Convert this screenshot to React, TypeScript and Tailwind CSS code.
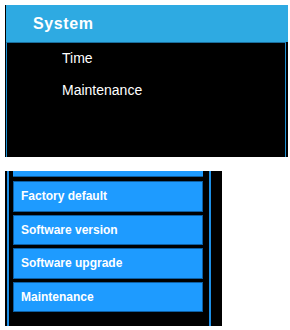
import React from "react";

const items = ["Factory default", "Software version", "Software upgrade", "Maintenance"];

function SystemMenu() {
  return (
    <div className="ml-[5px] mt-[5px] w-[283px] h-[152px] flex flex-col bg-black border-l border-black">
      <div className="h-[37px] bg-[#2eaae2] flex items-center pl-[27px]">
        <span className="text-white font-bold text-[16px] tracking-[0.6px]">System</span>
      </div>
      <div className="flex-1 bg-black border-t border-[#1b6e9c] border-x border-x-[#1e8fd0] mr-[2px] pl-[55px] pt-[5px]">
        <div className="text-white text-[14px] leading-[20px] h-[20px]">Time</div>
        <div className="text-white text-[14px] leading-[20px] h-[20px] mt-[12px]">Maintenance</div>
      </div>
    </div>
  );
}

function ButtonList() {
  return (
    <div className="ml-[5px] mt-[14px] w-[217px] h-[155px] bg-black flex pl-[2px]">
      <div className="w-[2px] bg-[#1e8fe6]" />
      <div className="w-[200px] flex flex-col gap-[3px] pl-[4px] pr-[2px]">
        <div className="h-[6px] w-[190px] bg-[#1e9bff] border-b border-[#0d5fa3]" />
        <div className="flex flex-col gap-[3px] mt-[1px]">
          {items.map((t) => (
            <div
              key={t}
              className="h-[30.5px] w-[190px] bg-[#1e9bff] border border-[#0d5fa3] flex items-center pl-[7px]"
            >
              <span className="text-white font-bold text-[12px]">{t}</span>
            </div>
          ))}
        </div>
      </div>
      <div className="w-[2px] bg-[#1e8fe6]" />
    </div>
  );
}

export default function App() {
  return (
    <div className="w-[290px] h-[330px] bg-white overflow-hidden font-['Liberation_Sans',Arial,sans-serif]">
      <SystemMenu />
      <ButtonList />
    </div>
  );
}
